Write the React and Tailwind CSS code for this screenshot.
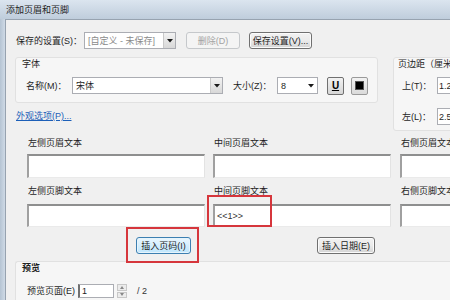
import React from "react";

const Arrow = () => (
  <svg width="6" height="4" viewBox="0 0 6 4"><polygon points="0,0 6,0 3,3.5" fill="#1a1a1a" /></svg>
);

function Combo({ w, text, dim, arrowBg }) {
  return (
    <div className={`flex shrink-0 h-[17px] ${w} border border-[#abadb3] bg-white`}>
      <div className={`flex-1 flex items-center pl-[3px] overflow-hidden whitespace-nowrap ${dim ? "text-[#8a8a8a]" : "text-[#1e1e1e]"}`}>{text}</div>
      <div className={`w-[12px] flex items-center justify-center ${arrowBg ? "bg-gradient-to-b from-[#f2f2f2] to-[#d8d8d8] border-l border-[#c9c9c9]" : ""}`}>
        <Arrow />
      </div>
    </div>
  );
}

function Btn({ w, children, disabled, focus }) {
  const base = "flex shrink-0 items-center justify-center h-[17px] rounded-[3px] border whitespace-nowrap";
  const look = disabled
    ? "border-[#c5c8cb] bg-[#f4f4f4] text-[#a3a3a3]"
    : focus
    ? "border-[#3c7fb1] bg-gradient-to-b from-[#eaf6fd] to-[#bee6fd] text-[#1e1e1e] shadow-[inset_0_0_0_1px_#e6f4fc]"
    : "border-[#707070] bg-gradient-to-b from-[#f2f2f2] via-[#ebebeb] to-[#d3d3d3] text-[#1e1e1e] shadow-[inset_0_0_0_1px_#fbfbfb]";
  return <div className={`${base} ${look} ${w}`}>{children}</div>;
}

function TextBox({ w, h, children }) {
  return (
    <div className={`${w} ${h} shrink-0 bg-white border-t-2 border-l-2 border-r border-b border-t-[#8e8f8f] border-l-[#a0a0a0] border-r-[#e3e3e3] border-b-[#eaeaea] pl-[2px] pt-[5px] text-[9px] text-[#333]`}>
      {children}
    </div>
  );
}

export default function App() {
  return (
    <div
      className="relative w-[450px] h-[300px] overflow-hidden flex flex-col bg-[#c6d4e2] text-[9px] leading-[10px] text-[#1e1e1e]"
      style={{ fontFamily: '"Liberation Sans", "Noto Sans CJK SC", sans-serif' }}
    >
      {/* title bar */}
      <div className="h-[19px] shrink-0 flex items-center pl-[6px] bg-gradient-to-b from-[#dbe5ef] to-[#bfcddc] text-[#222] text-[9px]">
        添加页眉和页脚
      </div>

      <div className="flex-1 flex min-h-0">
        <div className="w-[5px] shrink-0 bg-gradient-to-r from-[#b5c4d3] to-[#cfdae6]" />
        <div className="flex-1 min-w-0 bg-[#f0f0f0] border-l border-t border-[#97a3b0] flex flex-col">
          {/* row 1 */}
          <div className="mt-[12px] flex items-center h-[17px] pl-[10px]">
            <div className="w-[68px] shrink-0 whitespace-nowrap">保存的设置(S)：</div>
            <Combo w="w-[92px]" text="[自定义 - 未保存]" dim arrowBg />
            <div className="ml-[10px] shrink-0"><Btn w="w-[54px]" disabled>删除(D)</Btn></div>
            <div className="ml-[9px] shrink-0"><Btn w="w-[63px]">保存设置(V)...</Btn></div>
          </div>

          {/* row 2: font + margins */}
          <div className="mt-[8px] flex pl-[9px] h-[74px] shrink-0">
            <div className="w-[363px] shrink-0 flex flex-col">
              <div className="h-[46px] rounded-[3px] border border-[#e1e1e1] bg-[#f6f6f6] flex flex-col">
                <div className="pl-[6px] pt-[1px] leading-[10px]">字体</div>
                <div className="mt-[8px] flex items-center h-[17px] pl-[10px]">
                  <div className="w-[46px] shrink-0 whitespace-nowrap">名称(M)：</div>
                  <Combo w="w-[151px]" text="宋体" arrowBg />
                  <div className="ml-[10px] w-[44px] shrink-0 whitespace-nowrap">大小(Z)：</div>
                  <Combo w="w-[41px]" text="8" />
                  <div className="ml-[9px] shrink-0 w-[17px] h-[18px] rounded-[2px] border border-[#707070] bg-gradient-to-b from-[#f2f2f2] to-[#d6d6d6] flex items-center justify-center font-bold text-[10px] underline text-black">
                    U
                  </div>
                  <div className="ml-[7px] shrink-0 w-[17px] h-[18px] rounded-[2px] border border-[#9a9a9a] bg-gradient-to-b from-[#f2f2f2] to-[#dadada] flex items-center justify-center">
                    <div className="w-[9px] h-[9px] bg-black border border-[#555]" />
                  </div>
                </div>
              </div>
              <div className="mt-[8px] pl-[1px] text-[#1c5fb8] underline whitespace-nowrap">外观选项(P)...</div>
            </div>
            <div className="ml-[15px] shrink-0 w-[80px] h-[74px] rounded-[3px] border border-[#e1e1e1] bg-[#f6f6f6] flex flex-col">
              <div className="pl-[4px] pt-[1px] whitespace-nowrap">页边距（厘米）</div>
              <div className="mt-[8px] flex items-center h-[17px] pl-[8px]">
                <div className="w-[35px] shrink-0 whitespace-nowrap">上(T)：</div>
                <div className="flex-1 h-[17px] bg-white border border-[#abadb3] border-r-0 flex items-center pl-[1px] overflow-hidden">1.25</div>
              </div>
              <div className="mt-[14px] flex items-center h-[17px] pl-[8px]">
                <div className="w-[35px] shrink-0 whitespace-nowrap">左(L)：</div>
                <div className="flex-1 h-[17px] bg-white border border-[#abadb3] border-r-0 flex items-center pl-[1px] overflow-hidden">2.54</div>
              </div>
            </div>
          </div>

          {/* header texts */}
          <div className="mt-[7px] flex pl-[21px] shrink-0">
            <div className="w-[178px] shrink-0">
              <div className="h-[10px] pl-[1px] whitespace-nowrap">左侧页眉文本</div>
              <div className="mt-[6px]"><TextBox w="w-[178px]" h="h-[24px]" /></div>
            </div>
            <div className="w-[178px] shrink-0 ml-[8px]">
              <div className="h-[10px] pl-[1px] whitespace-nowrap">中间页眉文本</div>
              <div className="mt-[6px]"><TextBox w="w-[178px]" h="h-[24px]" /></div>
            </div>
            <div className="ml-[9px] w-[60px] shrink-0">
              <div className="h-[10px] pl-[1px] whitespace-nowrap">右侧页眉文本</div>
              <div className="mt-[6px]"><TextBox w="w-[60px]" h="h-[24px]" /></div>
            </div>
          </div>

          {/* footer texts */}
          <div className="mt-[8px] flex pl-[21px] shrink-0">
            <div className="w-[178px] shrink-0">
              <div className="h-[10px] pl-[1px] whitespace-nowrap">左侧页脚文本</div>
              <div className="mt-[8px]"><TextBox w="w-[178px]" h="h-[23px]" /></div>
            </div>
            <div className="w-[178px] shrink-0 ml-[8px]">
              <div className="h-[10px] pl-[1px] whitespace-nowrap">中间页脚文本</div>
              <div className="mt-[8px]"><TextBox w="w-[178px]" h="h-[23px]">&lt;&lt;1&gt;&gt;</TextBox></div>
            </div>
            <div className="ml-[9px] w-[60px] shrink-0">
              <div className="h-[10px] pl-[1px] whitespace-nowrap">右侧页脚文本</div>
              <div className="mt-[8px]"><TextBox w="w-[60px]" h="h-[23px]" /></div>
            </div>
          </div>

          {/* insert buttons */}
          <div className="mt-[10px] flex pl-[130px] shrink-0">
            <Btn w="w-[55px]" focus>插入页码(I)</Btn>
            <div className="ml-[126px] shrink-0"><Btn w="w-[58px]">插入日期(E)</Btn></div>
          </div>

          {/* preview group */}
          <div className="mt-[7px] ml-[9px] flex-1 rounded-tl-[3px] border-t border-l border-[#e1e1e1] bg-[#f6f6f6] flex flex-col">
            <div className="pl-[6px] pt-[1px] font-bold">预览</div>
            <div className="mt-[11px] flex items-center pl-[11px]">
              <div className="w-[51px] shrink-0 whitespace-nowrap">预览页面(E)</div>
              <div className="w-[36px] shrink-0 h-[14px] bg-white border border-[#abadb3] border-l-2 border-l-[#707070] flex items-center pl-[2px]">1</div>
              <div className="ml-[3px] w-[10px] h-[14px] shrink-0 flex flex-col gap-[1px]">
                <div className="flex-1 border border-[#c8c8c8] bg-[#ececec] flex items-center justify-center">
                  <svg width="4" height="3" viewBox="0 0 4 3"><polygon points="0,3 4,3 2,0" fill="#888" /></svg>
                </div>
                <div className="flex-1 border border-[#c8c8c8] bg-[#ececec] flex items-center justify-center">
                  <svg width="4" height="3" viewBox="0 0 4 3"><polygon points="0,0 4,0 2,3" fill="#888" /></svg>
                </div>
              </div>
              <div className="ml-[10px] text-[#333]">/ 2</div>
            </div>
          </div>
        </div>
      </div>

      {/* red annotation boxes */}
      <div className="absolute left-[126px] top-[227px] w-[73px] h-[36px] border-2 border-[#d6363c]" />
      <div className="absolute left-[207px] top-[195px] w-[65px] h-[32px] border-2 border-[#d6363c]" />
    </div>
  );
}
